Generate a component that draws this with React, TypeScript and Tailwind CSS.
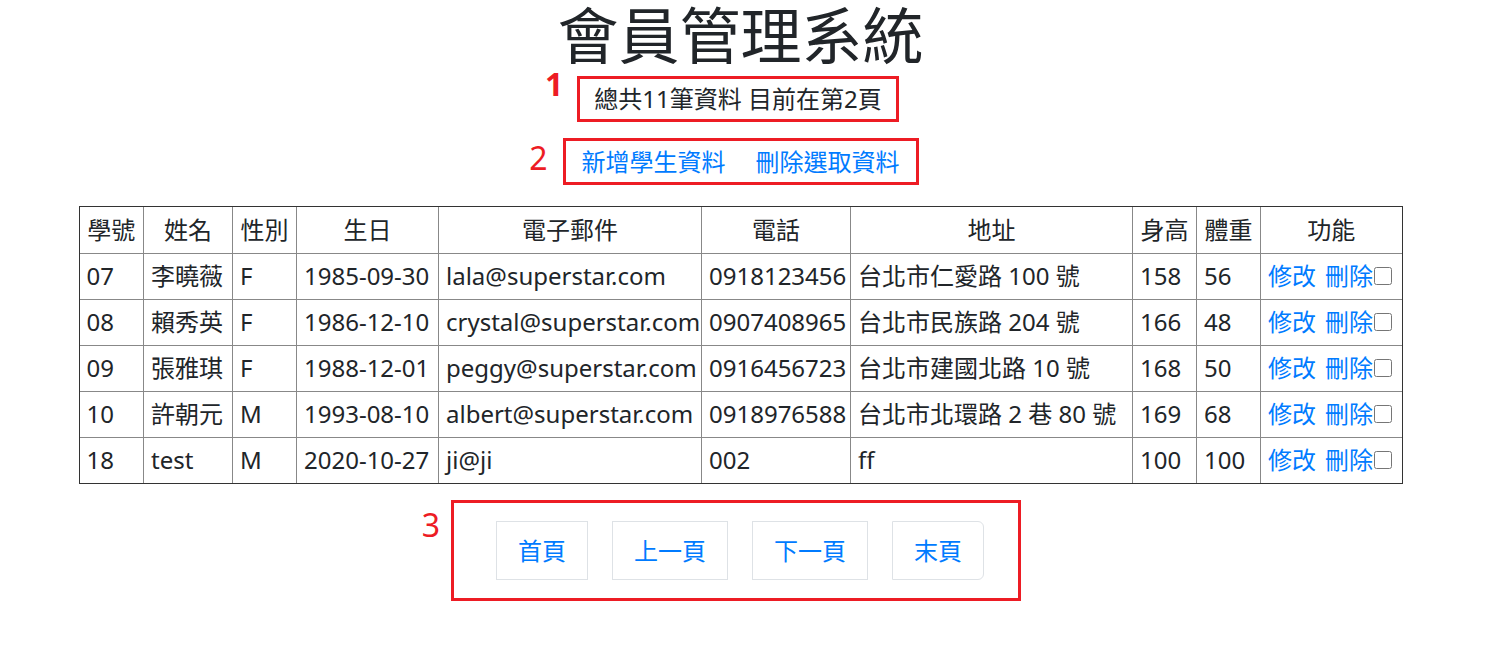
const rows = [
    { id: "07", name: "李曉薇", sex: "F", birth: "1985-09-30", email: "lala@superstar.com", phone: "0918123456", addr: "台北市仁愛路 100 號", h: "158", w: "56" },
    { id: "08", name: "賴秀英", sex: "F", birth: "1986-12-10", email: "crystal@superstar.com", phone: "0907408965", addr: "台北市民族路 204 號", h: "166", w: "48" },
    { id: "09", name: "張雅琪", sex: "F", birth: "1988-12-01", email: "peggy@superstar.com", phone: "0916456723", addr: "台北市建國北路 10 號", h: "168", w: "50" },
    { id: "10", name: "許朝元", sex: "M", birth: "1993-08-10", email: "albert@superstar.com", phone: "0918976588", addr: "台北市北環路 2 巷 80 號", h: "169", w: "68" },
    { id: "18", name: "test", sex: "M", birth: "2020-10-27", email: "ji@ji", phone: "002", addr: "ff", h: "100", w: "100" },
];

const headers = ["學號", "姓名", "性別", "生日", "電子郵件", "電話", "地址", "身高", "體重", "功能"];

const App = () => {
    const td = "border border-[#888] h-[46px] pl-[7px] pr-0 whitespace-nowrap";
    return (
        <div
            className="w-[1481px] flex flex-col items-center text-[#212529] bg-white"
            style={{ fontFamily: '"Noto Sans", "Noto Sans CJK TC", sans-serif' }}
        >
            <h1 className="mt-[1px] text-[61px] leading-[1.15] font-normal">會員管理系統</h1>

            {/* box 1 */}
            <div className="relative mt-[5px] mr-[5px] h-[46px] border-[3px] border-[#ed1c24] px-[14px] flex items-center text-[24px]">
                <span className="absolute right-full mr-[17px] top-[-11px] text-[32px] leading-none font-bold text-[#ed1c24]">1</span>
                總共11筆資料 目前在第2頁
            </div>

            {/* box 2 */}
            <div className="relative mt-[16px] h-[47px] border-[3px] border-[#ed1c24] px-[16px] flex items-center gap-[30px] text-[24px] text-[#007bff]">
                <span className="absolute right-full mr-[18px] top-[1px] text-[32px] leading-none text-[#ed1c24]">2</span>
                <a href="#">新增學生資料</a>
                <a href="#">刪除選取資料</a>
            </div>

            {/* table */}
            <div className="mt-[21px] border border-[#333]">
                <table className="table-fixed border-collapse border-hidden w-[1322px] text-[24px]">
                    <colgroup>
                        <col className="w-[64px]" />
                        <col className="w-[89px]" />
                        <col className="w-[64px]" />
                        <col className="w-[142px]" />
                        <col className="w-[263px]" />
                        <col className="w-[149px]" />
                        <col className="w-[282px]" />
                        <col className="w-[64px]" />
                        <col className="w-[64px]" />
                        <col className="w-[141px]" />
                    </colgroup>
                    <thead>
                        <tr>
                            {headers.map((h) => (
                                <th key={h} className="border border-[#888] h-[46px] font-normal text-center whitespace-nowrap">{h}</th>
                            ))}
                        </tr>
                    </thead>
                    <tbody>
                        {rows.map((r) => (
                            <tr key={r.id}>
                                <td className={td}>{r.id}</td>
                                <td className={td}>{r.name}</td>
                                <td className={td}>{r.sex}</td>
                                <td className={td}>{r.birth}</td>
                                <td className={td}>{r.email}</td>
                                <td className={td}>{r.phone}</td>
                                <td className={td}>{r.addr}</td>
                                <td className={td}>{r.h}</td>
                                <td className={td}>{r.w}</td>
                                <td className={td}>
                                    <span className="flex items-center">
                                        <a href="#" className="text-[#007bff]">修改</a>
                                        <a href="#" className="text-[#007bff] ml-[9px]">刪除</a>
                                        <input type="checkbox" className="w-[18px] h-[18px] m-0 ml-[1px]" />
                                    </span>
                                </td>
                            </tr>
                        ))}
                    </tbody>
                </table>
            </div>

            {/* box 3 pagination */}
            <div className="relative mt-[16px] mr-[9px] h-[101px] border-[3px] border-[#ed1c24] pl-[42px] pr-[34px] flex items-center gap-[24px] text-[24px] text-[#007bff]">
                <span className="absolute right-full mr-[14px] top-[6px] text-[32px] leading-none text-[#ed1c24]">3</span>
                {["首頁", "上一頁", "下一頁", "末頁"].map((p, i) => (
                    <a
                        key={p}
                        href="#"
                        className={
                            "h-[59px] px-[21px] flex items-center border border-[#dee2e6] bg-white " +
                            (i === 3 ? "rounded-r-[6px]" : "")
                        }
                    >
                        {p}
                    </a>
                ))}
            </div>
        </div>
    );
};

export default App;
